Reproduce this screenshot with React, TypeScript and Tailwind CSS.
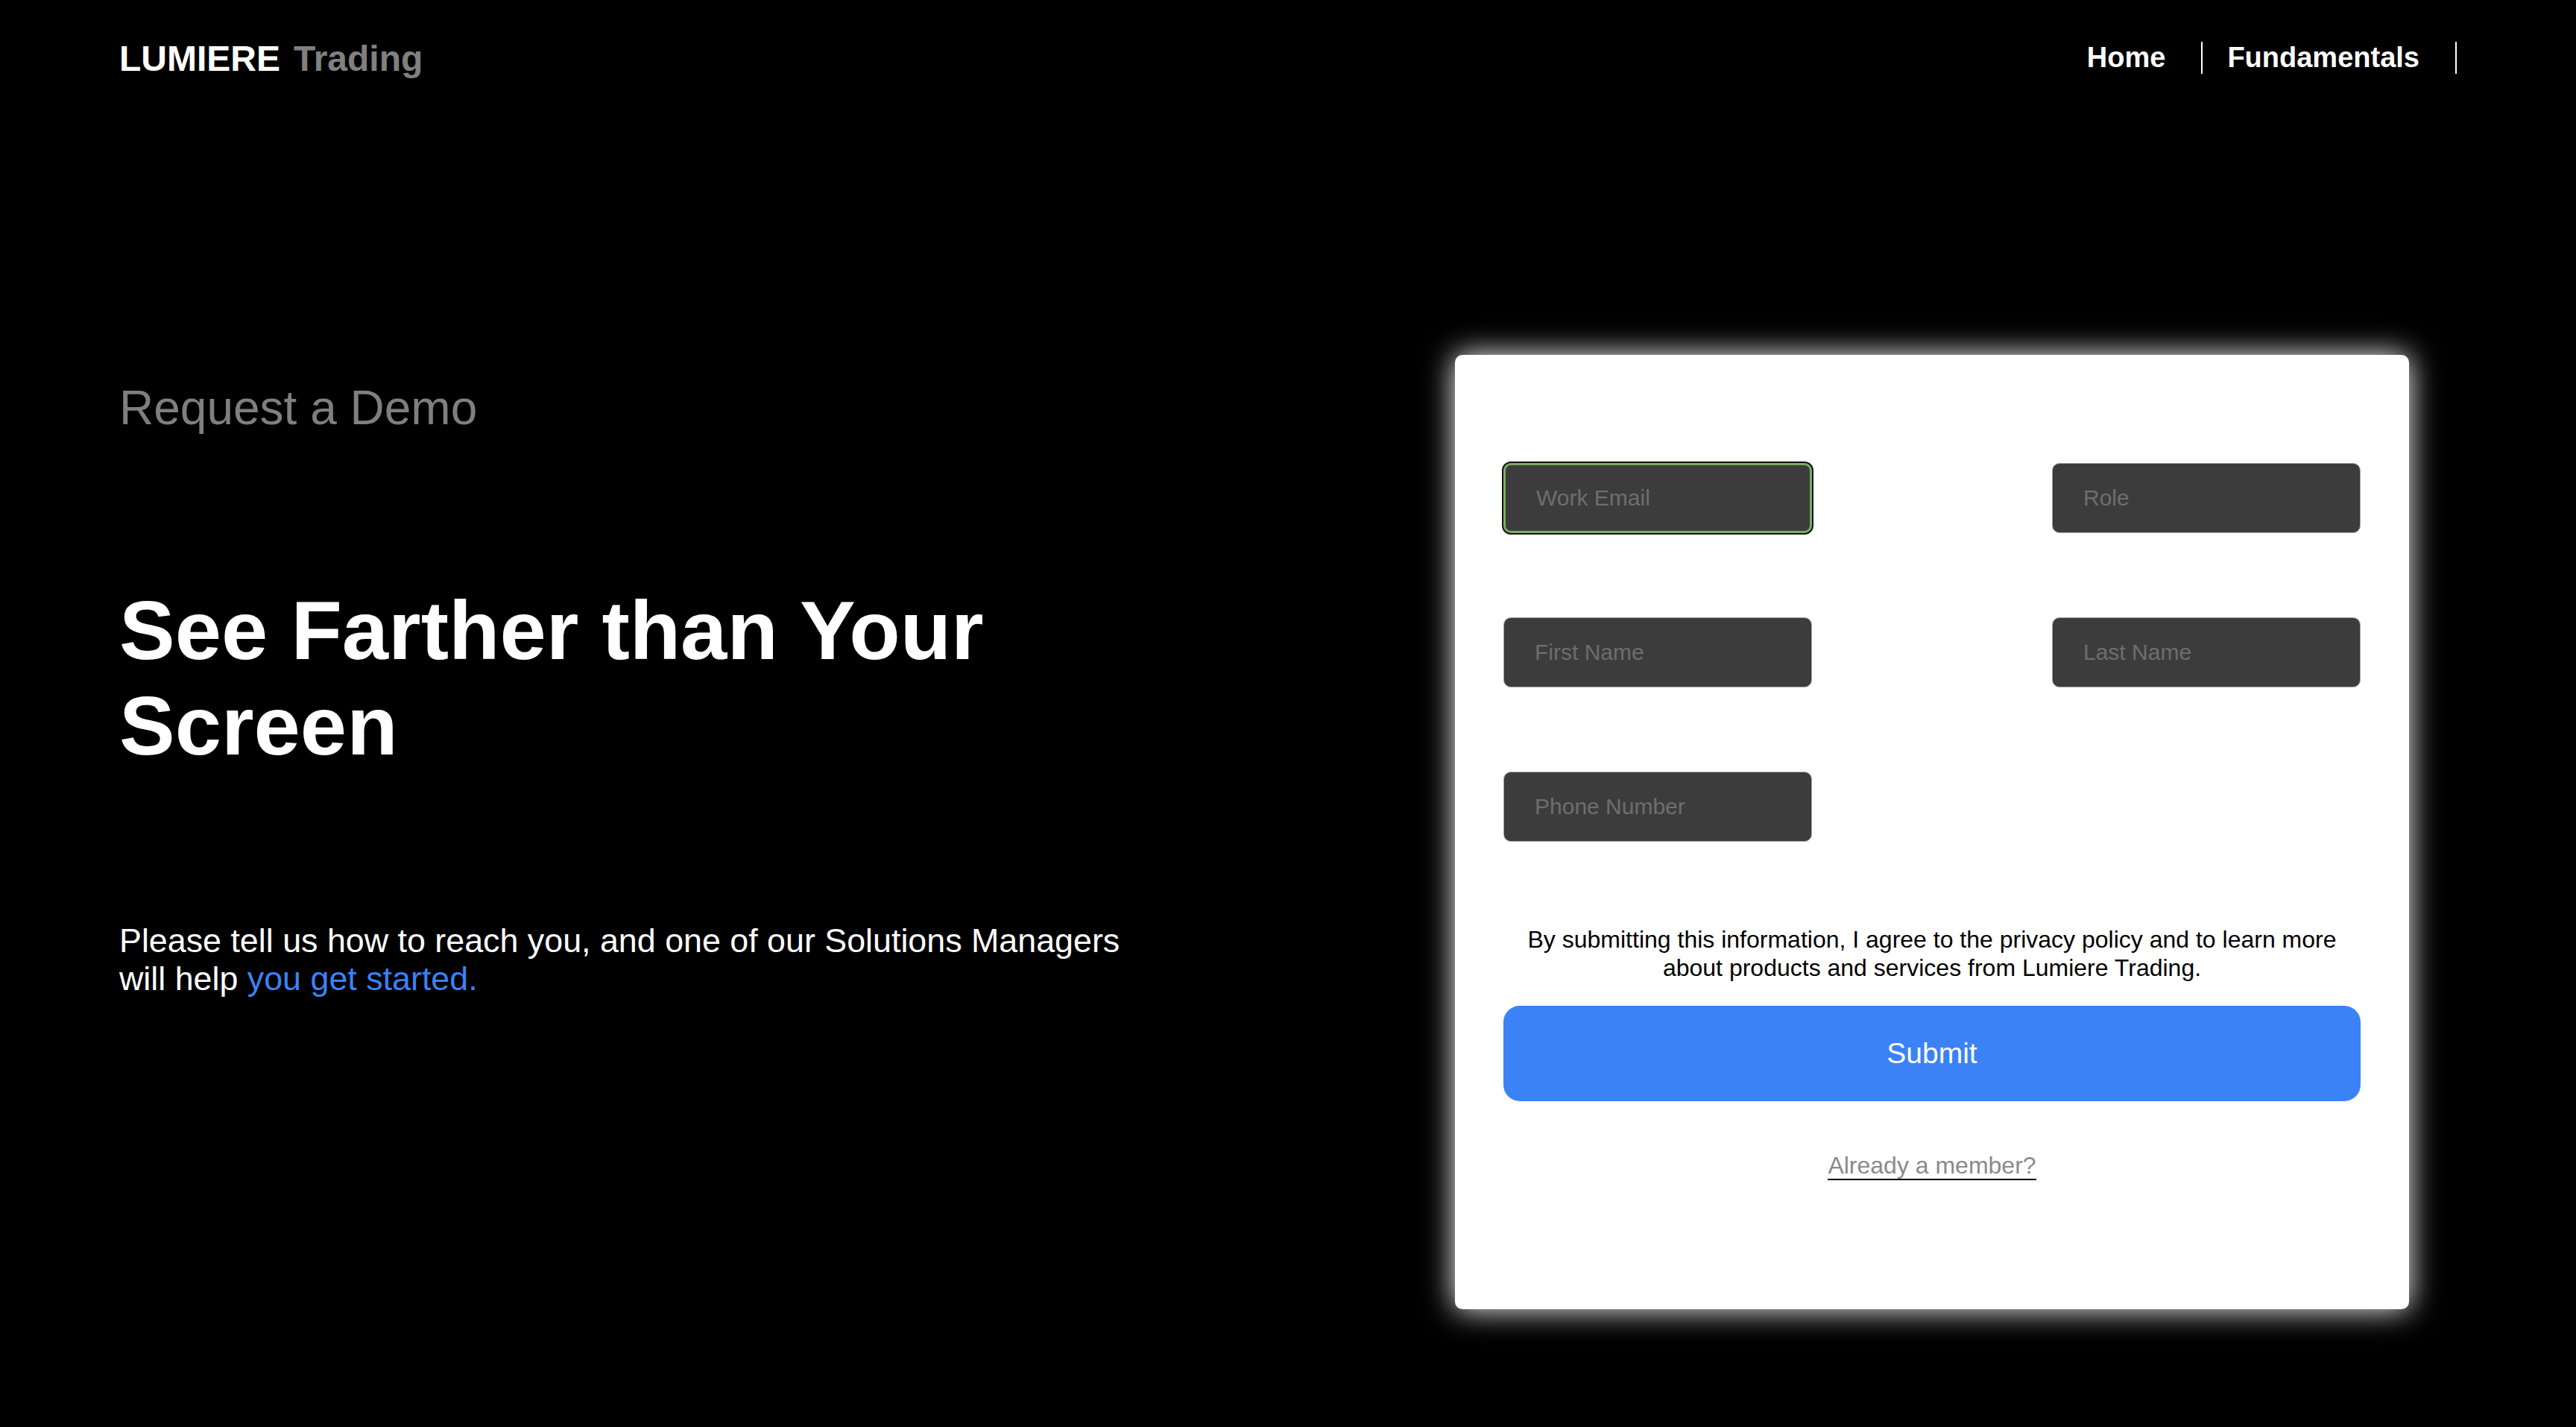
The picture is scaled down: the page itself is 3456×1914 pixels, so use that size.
const inputBase =
  "h-[94px] w-[414px] rounded-[10px] bg-[#3c3c3c] pl-[41px] pr-4 text-[30px] text-white outline-none placeholder:text-[#6e6e6e]"

const Field = ({ placeholder, focused }: { placeholder: string; focused?: boolean }) => (
  <input
    type="text"
    placeholder={placeholder}
    className={
      focused
        ? inputBase + " border-[3px] border-[#79ad5f] pl-[39px] shadow-[0_0_0_2px_#151515]"
        : inputBase + " border border-[#a8a3a3]"
    }
  />
)

export default function App() {
  return (
    <div className="min-h-screen bg-black text-white font-['Liberation_Sans',Arial,sans-serif]">
      {/* Header */}
      <header className="flex h-[154px] items-center justify-between px-40">
        <div className="flex gap-[18px] pt-[4px] text-[48px] font-bold leading-none">
          <span className="text-white">LUMIERE</span>
          <span className="text-[#808080]">Trading</span>
        </div>
        <nav className="flex items-center text-[38px] font-bold">
          <a href="#" className="text-white">Home</a>
          <span className="ml-[48px] mr-[33px] h-[43px] w-[2px] bg-white" />
          <a href="#" className="text-white">Fundamentals</a>
          <span className="ml-[48px] h-[43px] w-[2px] bg-white" />
        </nav>
      </header>

      {/* Main */}
      <main className="flex items-start px-40">
        <div className="mt-[356px] w-[1380px]">
          <p className="text-[64px] leading-[74px] text-[#7f7f7f]">Request a Demo</p>
          <h1 className="mt-[198px] text-[112px] font-bold leading-[128px]">See Farther than Your Screen</h1>
          <p className="mt-[198px] text-[44.8px] leading-[51px]">
            Please tell us how to reach you, and one of our Solutions Managers will help{" "}
            <span className="text-[#3b82f6]">you get started.</span>
          </p>
        </div>

        {/* Form card */}
        <div className="ml-auto mr-[64px] mt-[322px] h-[1280px] w-[1280px] rounded-[10px] bg-white px-[65px] pt-[145px] shadow-[0_0_40px_#ffffff]">
          <div className="flex flex-col gap-[113px]">
            <div className="flex justify-between">
              <Field placeholder="Work Email" focused />
              <Field placeholder="Role" />
            </div>
            <div className="flex justify-between">
              <Field placeholder="First Name" />
              <Field placeholder="Last Name" />
            </div>
            <div className="flex">
              <Field placeholder="Phone Number" />
            </div>
          </div>

          <p className="mt-[112px] text-center text-[32px] leading-[38px] text-black">
            By submitting this information, I agree to the privacy policy and to learn more about products and services
            from Lumiere Trading.
          </p>

          <button className="mt-[32px] h-[128px] w-full rounded-[22px] bg-[#3b82f6] text-[39px] text-white">
            Submit
          </button>

          <div className="mt-[62px] text-center text-[32px]">
            <a href="#" className="border-b-2 border-black text-[#8a8a8a]">
              Already a member?
            </a>
          </div>
        </div>
      </main>
    </div>
  )
}
